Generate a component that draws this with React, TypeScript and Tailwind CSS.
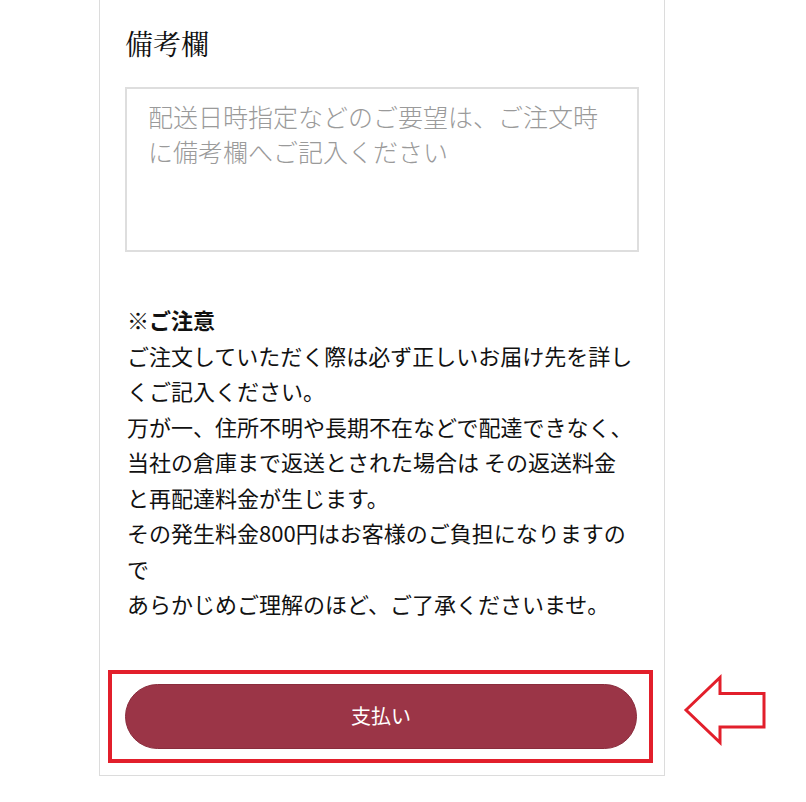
import React from "react";

const sans = '"Noto Sans CJK JP", "Noto Sans", sans-serif';
const serif = '"Noto Serif CJK JP", "Liberation Serif", "Noto Sans CJK JP", serif';

// line breaks kept as they appear on the page
const NOTES = [
  "ご注文していただく際は必ず正しいお届け先を詳し",
  "くご記入ください。",
  "万が一、住所不明や長期不在などで配達できなく、",
  "当社の倉庫まで返送とされた場合は その返送料金",
  "と再配達料金が生じます。",
  "その発生料金800円はお客様のご負担になりますの",
  "で",
  "あらかじめご理解のほど、ご了承くださいませ。",
];

function ArrowLeft() {
  return (
    <svg width="86" height="72" viewBox="0 0 86 72" className="absolute left-[682px] top-[674px]">
      <path
        d="M4 36 L38 3.5 L38 19.5 L82 19.5 L82 53 L38 53 L38 68.5 Z"
        fill="white"
        stroke="#e21f2b"
        strokeWidth="3"
        strokeLinejoin="miter"
      />
    </svg>
  );
}

export default function App() {
  return (
    <div className="relative w-[806px] h-[802px] bg-white" style={{ fontFamily: sans }}>
      <div className="ml-[99px] w-[566px] h-[776px] border border-t-0 border-[#dcdcdc] px-[25px] pt-[24px]">
        <h2 className="text-[28px] leading-[38px] text-[#111]" style={{ fontFamily: serif }}>
          備考欄
        </h2>
        <textarea
          className="mt-[25px] block w-[514px] h-[165px] resize-none border-2 border-[#dedede] px-[21px] py-[10px] text-[25px] font-light leading-[35px] text-[#333] placeholder:text-[#9a9a9a] outline-none"
          placeholder="配送日時指定などのご要望は、ご注文時に備考欄へご記入ください"
        />
        <div className="mt-[50px] w-[520px] pl-[2px] text-[22px] leading-[35.5px] text-[#111] whitespace-nowrap">
          <p className="font-bold">※ご注意</p>
          {NOTES.map((line) => (
            <p key={line}>{line}</p>
          ))}
        </div>
        <button className="mt-[62px] flex h-[65px] w-[512px] items-center justify-center rounded-full border border-[#8a2d3d] bg-[#9b3547] text-[20px] text-white">
          支払い
        </button>
      </div>
      <div className="pointer-events-none absolute left-[108px] top-[670px] h-[93px] w-[545px] border-4 border-[#e21f2b]" />
      <ArrowLeft />
    </div>
  );
}
